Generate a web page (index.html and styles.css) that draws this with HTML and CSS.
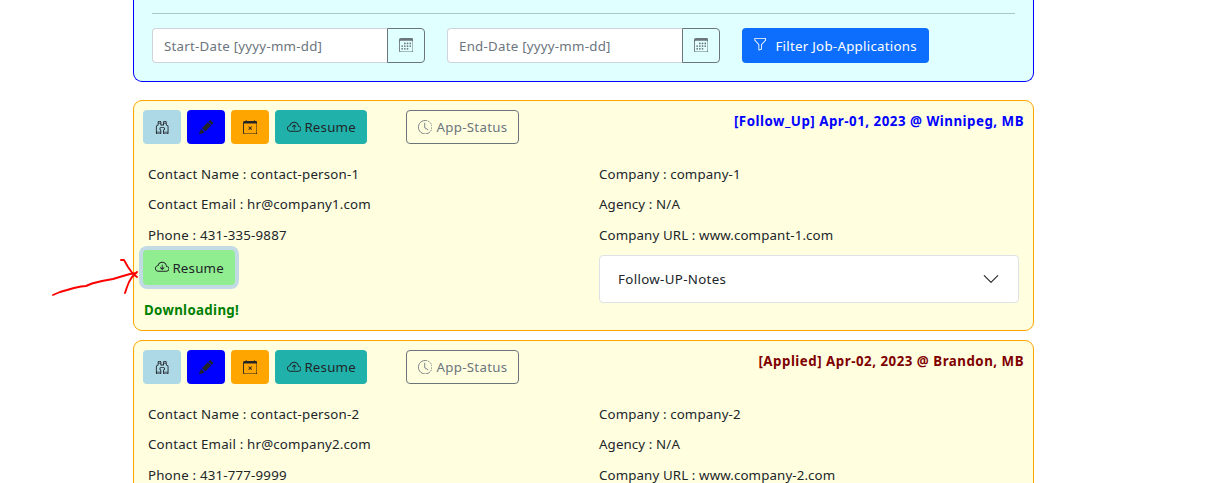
FILE: index.html
```html
<!DOCTYPE html>
<html lang="en">
<head>
<meta charset="utf-8">
<title>Job Applications</title>
<link rel="stylesheet" href="styles.css">
</head>
<body>
<svg class="defs" width="0" height="0">
  <symbol id="calendar" viewBox="0 0 16 16"><path d="M14 0H2a2 2 0 0 0-2 2v12a2 2 0 0 0 2 2h12a2 2 0 0 0 2-2V2a2 2 0 0 0-2-2zM1 3.857C1 3.384 1.448 3 2 3h12c.552 0 1 .384 1 .857v10.286c0 .473-.448.857-1 .857H2c-.552 0-1-.384-1-.857V3.857z"/><path d="M6.500 7a1 1 0 1 0 0-2 1 1 0 0 0 0 2zm3 0a1 1 0 1 0 0-2 1 1 0 0 0 0 2zm3 0a1 1 0 1 0 0-2 1 1 0 0 0 0 2zm-9 3a1 1 0 1 0 0-2 1 1 0 0 0 0 2zm3 0a1 1 0 1 0 0-2 1 1 0 0 0 0 2zm3 0a1 1 0 1 0 0-2 1 1 0 0 0 0 2zm3 0a1 1 0 1 0 0-2 1 1 0 0 0 0 2zm-9 3a1 1 0 1 0 0-2 1 1 0 0 0 0 2zm3 0a1 1 0 1 0 0-2 1 1 0 0 0 0 2zm3 0a1 1 0 1 0 0-2 1 1 0 0 0 0 2z"/></symbol>
  <symbol id="funnel" viewBox="0 0 16 16"><path d="M1.500 1.500A.5.5 0 0 1 2 1h12a.5.5 0 0 1 .5.5v2a.5.5 0 0 1-.128.334L10 8.692V13.500a.5.5 0 0 1-.342.474l-3 1A.5.5 0 0 1 6 14.500V8.692L1.628 3.834A.5.5 0 0 1 1.500 3.500v-2zm1 .5v1.308l4.372 4.858A.5.5 0 0 1 7 8.500v5.306l2-.666V8.500a.5.5 0 0 1 .128-.334L13.500 3.308V2h-11z"/></symbol>
  <symbol id="binoculars" viewBox="0 0 16 16"><path d="M3 2.500A1.500 1.500 0 0 1 4.500 1h1A1.500 1.500 0 0 1 7 2.500V5h2V2.500A1.500 1.500 0 0 1 10.500 1h1A1.500 1.500 0 0 1 13 2.500v2.382a.5.5 0 0 0 .276.447l.895.447A1.500 1.500 0 0 1 15 7.118V14.500a1.500 1.500 0 0 1-1.500 1.500h-3A1.500 1.500 0 0 1 9 14.500v-3a.5.5 0 0 1 .146-.354l.854-.853V9.500a.5.5 0 0 0-.5-.5h-3a.5.5 0 0 0-.5.5v.793l.854.853A.5.5 0 0 1 7 11.500v3A1.500 1.500 0 0 1 5.500 16h-3A1.500 1.500 0 0 1 1 14.500V7.118a1.500 1.500 0 0 1 .83-1.342l.894-.447A.5.5 0 0 0 3 4.882V2.500zM4.500 2a.5.5 0 0 0-.5.5V3h2v-.5a.5.5 0 0 0-.5-.5h-1zM6 4H4v.882a1.500 1.500 0 0 1-.83 1.342l-.894.447A.5.5 0 0 0 2 7.118V13h4v-1.293l-.854-.853A.5.5 0 0 1 5 10.500v-1A1.500 1.500 0 0 1 6.500 8h3A1.500 1.500 0 0 1 11 9.500v1a.5.5 0 0 1-.146.354l-.854.853V13h4V7.118a.5.5 0 0 0-.276-.447l-.895-.447A1.500 1.500 0 0 1 12 4.882V4h-2v1.500a.5.5 0 0 1-.5.5h-3a.5.5 0 0 1-.5-.5V4zm4-1h2v-.5a.5.5 0 0 0-.5-.5h-1a.5.5 0 0 0-.5.5V3zm4 11h-4v.5a.5.5 0 0 0 .5.5h3a.5.5 0 0 0 .5-.5V14zm-8 0H2v.5a.5.5 0 0 0 .5.5h3a.5.5 0 0 0 .5-.5V14z"/></symbol>
  <symbol id="pencil" viewBox="0 0 16 16"><path d="M12.854.146a.5.5 0 0 0-.707 0L10.500 1.793 14.207 5.500l1.647-1.646a.5.5 0 0 0 0-.708l-3-3zm.646 6.061L9.793 2.500 3.293 9H3.500a.5.5 0 0 1 .5.5v.5h.5a.5.5 0 0 1 .5.5v.5h.5a.5.5 0 0 1 .5.5v.5h.5a.5.5 0 0 1 .5.5v.207l6.500-6.500zm-7.468 7.468A.5.5 0 0 1 6 13.500V13h-.5a.5.5 0 0 1-.5-.5V12h-.5a.5.5 0 0 1-.5-.5V11h-.5a.5.5 0 0 1-.5-.5V10h-.5a.499.499 0 0 1-.175-.032l-.179.178a.5.5 0 0 0-.11.168l-2 5a.5.5 0 0 0 .65.65l5-2a.5.5 0 0 0 .168-.11l.178-.178z"/></symbol>
  <symbol id="calendar-x" viewBox="0 0 16 16"><path d="M6.146 7.146a.5.5 0 0 1 .708 0L8 8.293l1.146-1.147a.5.5 0 1 1 .708.708L8.707 9l1.147 1.146a.5.5 0 0 1-.708.708L8 9.707l-1.146 1.147a.5.5 0 0 1-.708-.708L7.293 9 6.146 7.854a.5.5 0 0 1 0-.708z"/><path d="M3.500 0a.5.5 0 0 1 .5.5V1h8V.5a.5.5 0 0 1 1 0V1h1a2 2 0 0 1 2 2v11a2 2 0 0 1-2 2H2a2 2 0 0 1-2-2V3a2 2 0 0 1 2-2h1V.5a.5.5 0 0 1 .5-.5zM1 4v10a1 1 0 0 0 1 1h12a1 1 0 0 0 1-1V4H1z"/></symbol>
  <symbol id="cloud" viewBox="0 0 16 16"><path d="M4.406 3.342A5.530 5.530 0 0 1 8 2c2.690 0 4.923 2 5.166 4.579C14.758 6.804 16 8.137 16 9.773 16 11.569 14.502 13 12.687 13H3.781C1.708 13 0 11.366 0 9.318c0-1.763 1.266-3.223 2.942-3.593.143-.863.698-1.723 1.464-2.383zm.653.757c-.757.653-1.153 1.440-1.153 2.056v.448l-.445.049C2.064 6.805 1 7.952 1 9.318 1 10.785 2.230 12 3.781 12h8.906C13.980 12 15 10.988 15 9.773c0-1.216-1.020-2.228-2.313-2.228h-.5v-.5C12.188 4.825 10.328 3 8 3a4.530 4.530 0 0 0-2.941 1.100z"/></symbol>
  <symbol id="cloud-up" viewBox="0 0 16 16"><use href="#cloud"/><path d="M7.646 5.146a.5.5 0 0 1 .708 0l2 2a.5.5 0 0 1-.708.708L8.500 6.707V10.500a.5.5 0 0 1-1 0V6.707L6.354 7.854a.5.5 0 1 1-.708-.708l2-2z"/></symbol>
  <symbol id="cloud-down" viewBox="0 0 16 16"><use href="#cloud"/><path d="M7.646 10.854a.5.5 0 0 0 .708 0l2-2a.5.5 0 0 0-.708-.708L8.500 9.293V5.500a.5.5 0 0 0-1 0v3.793L6.354 8.146a.5.5 0 1 0-.708.708l2 2z"/></symbol>
  <symbol id="clock" viewBox="0 0 16 16"><g fill="none" stroke="currentColor"><path d="M8 .5a7.500 7.500 0 1 0 5.300 12.800"/><path d="M8 .5a7.500 7.500 0 0 1 5.300 12.800" stroke-dasharray="1.900 1"/><path d="M7.500 3.500v5.200l3.500 2" stroke-linecap="round"/></g></symbol>
</svg>

<main class="page">
  <section class="filter">
    <hr class="rule">
    <div class="filter-row">
      <div class="date"><input class="date-input" placeholder="Start-Date [yyyy-mm-dd]"><button class="date-btn"><svg class="icon"><use href="#calendar"/></svg></button></div>
      <div class="date"><input class="date-input" placeholder="End-Date [yyyy-mm-dd]"><button class="date-btn"><svg class="icon"><use href="#calendar"/></svg></button></div>
      <button class="btn primary"><svg class="icon"><use href="#funnel"/></svg><span>Filter Job-Applications</span></button>
    </div>
  </section>

  <article class="card">
    <header class="head">
      <button class="btn square view"><svg class="icon"><use href="#binoculars"/></svg></button>
      <button class="btn square edit"><svg class="icon"><use href="#pencil"/></svg></button>
      <button class="btn square close"><svg class="icon"><use href="#calendar-x"/></svg></button>
      <button class="btn upload"><svg class="icon"><use href="#cloud-up"/></svg><span>Resume</span></button>
      <button class="btn status"><svg class="icon"><use href="#clock"/></svg><span>App-Status</span></button>
      <div class="title follow">[Follow_Up] Apr-01, 2023 @ Winnipeg, MB</div>
    </header>
    <div class="cols">
      <div class="col">
        <div class="line">Contact Name : contact-person-1</div>
        <div class="line">Contact Email : hr@company1.com</div>
        <div class="line">Phone : 431-335-9887</div>
        <button class="btn download"><svg class="icon"><use href="#cloud-down"/></svg><span>Resume</span></button>
        <div class="message">Downloading!</div>
      </div>
      <div class="col company">
        <div class="line">Company : company-1</div>
        <div class="line">Agency : N/A</div>
        <div class="line">Company URL : www.compant-1.com</div>
        <div class="notes"><span>Follow-UP-Notes</span><svg class="chevron" viewBox="0 0 16 16"><path d="M2 5l6 6 6-6"/></svg></div>
      </div>
    </div>
  </article>

  <article class="card">
    <header class="head">
      <button class="btn square view"><svg class="icon"><use href="#binoculars"/></svg></button>
      <button class="btn square edit"><svg class="icon"><use href="#pencil"/></svg></button>
      <button class="btn square close"><svg class="icon"><use href="#calendar-x"/></svg></button>
      <button class="btn upload"><svg class="icon"><use href="#cloud-up"/></svg><span>Resume</span></button>
      <button class="btn status"><svg class="icon"><use href="#clock"/></svg><span>App-Status</span></button>
      <div class="title applied">[Applied] Apr-02, 2023 @ Brandon, MB</div>
    </header>
    <div class="cols">
      <div class="col">
        <div class="line">Contact Name : contact-person-2</div>
        <div class="line">Contact Email : hr@company2.com</div>
        <div class="line">Phone : 431-777-9999</div>
      </div>
      <div class="col company">
        <div class="line">Company : company-2</div>
        <div class="line">Agency : N/A</div>
        <div class="line">Company URL : www.company-2.com</div>
      </div>
    </div>
  </article>
</main>

<svg class="arrow" viewBox="0 0 90 40"><path d="M3 38L10 35 17 33 24 31 31 29.500 36 29 42 26.500 52 24 63 22 73 19 80 17 86 16M71 3H74L78 10 83 17 87 20M87 15L82 20 79 25 77 30 75 36"/></svg>
</body>
</html>
```
FILE: styles.css
```css
* { box-sizing: border-box; }
html { height: 100%; overflow: hidden; }
body {
  margin: 0;
  height: 100%;
  overflow: hidden;
  background: #fff;
  color: #212529;
  font: 13.3px/22px "Noto Sans", "Open Sans", sans-serif;
}
button, input { font: inherit; color: inherit; margin: 0; }
.defs { position: absolute; }
.page { width: 901px; height: 100%; margin-left: 133px; overflow: hidden; }
.icon { width: 14.4px; height: 14.4px; fill: currentColor; flex: none; }

.filter {
  height: 82px;
  padding: 13px 18px 0;
  background: #e0ffff;
  border: solid #0000ff;
  border-width: 0 1px 1px;
  border-radius: 0 0 9px 9px;
}
.rule { height: 1px; margin: 0 0 14px; border: 0; background: #a5c7c8; }
.filter-row { display: flex; }
.date { display: flex; width: 273px; height: 35px; margin-right: 22px; }
.date-input {
  flex: 1;
  min-width: 0;
  padding: 0 11px;
  letter-spacing: 0.24px;
  background: #fff;
  border: 1px solid #ced4da;
  border-right: 0;
  border-radius: 4px 0 0 4px;
}
.date-input::placeholder { color: #6c757d; opacity: 1; }
.date-btn {
  display: flex;
  width: 38px;
  padding: 9px 0 0;
  justify-content: center;
  color: #6c757d;
  background: transparent;
  border: 1px solid #6c757d;
  border-radius: 0 4px 4px 0;
}

.btn {
  display: flex;
  align-items: center;
  gap: 3px;
  height: 34px;
  padding: 0 11px;
  border: 1px solid transparent;
  border-radius: 4px;
  letter-spacing: 0.2px;
  white-space: nowrap;
}
.primary { width: 187px; height: 35px; gap: 8px; padding-left: 10px; color: #fff; background: #0d6efd; letter-spacing: 0.26px; }
.primary .icon { margin-top: -3px; }

.card {
  height: 231px;
  margin-top: 18px;
  padding: 9px;
  background: #ffffe0;
  border: 1px solid #ffa500;
  border-radius: 9px;
}
.card + .card { margin-top: 9px; }
.head { display: flex; gap: 6px; height: 34px; }
.square { width: 38px; padding: 0; justify-content: center; }
.view { background: #add8e6; }
.edit { background: #0000ff; }
.close { background: #ffa500; }
.upload { width: 92px; background: #20b2aa; }
.status { width: 113px; margin-left: 33px; gap: 4px; letter-spacing: 0.3px; color: #6c757d; background: transparent; border-color: #6c757d; }
.title { margin-left: auto; font-weight: 700; letter-spacing: 0.51px; white-space: nowrap; }
.follow { color: #0000ff; }
.applied { color: #800000; }

.cols { display: grid; grid-template-columns: 451px 420px; padding: 15px 0 0 5px; letter-spacing: 0.18px; }
.company { letter-spacing: 0.12px; }
.line { height: 31px; padding-top: 4px; white-space: nowrap; }
.line:first-child { height: 30px; }
.download {
  width: 92px;
  height: 35px;
  margin: -1px 0 0 -5px;
  background: #90ee90;
  box-shadow: 0 0 0 4px #c2dae4;
}
.message { margin: 14px 0 0 -4px; font-weight: 700; letter-spacing: 0.33px; color: #008000; }
.notes {
  display: flex;
  align-items: center;
  justify-content: space-between;
  height: 48px;
  margin-top: 4px;
  padding: 0 18px;
  letter-spacing: 0.34px;
  background: #fff;
  border: 1px solid #dee2e6;
  border-radius: 4px;
}
.chevron { width: 18px; height: 18px; fill: none; stroke: #212529; stroke-linecap: round; stroke-linejoin: round; }

/* Hand-drawn pointer laid over the first card's edge. */
.arrow {
  position: absolute;
  left: 50px;
  top: 257px;
  width: 90px;
  height: 40px;
  fill: none;
  stroke: #ff0000;
  stroke-width: 1.9;
  stroke-linecap: round;
  stroke-linejoin: round;
}
```
